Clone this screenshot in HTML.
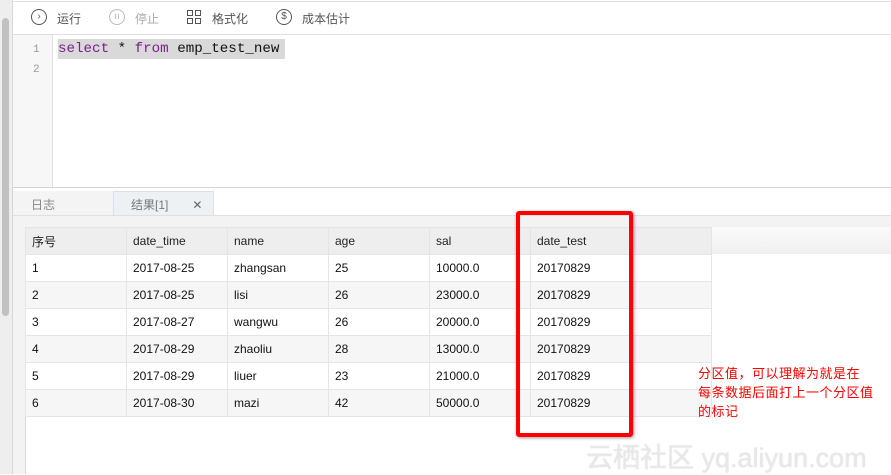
<!DOCTYPE html><html><head><meta charset="utf-8"><style>
*{margin:0;padding:0;box-sizing:border-box}
body{width:891px;height:474px;overflow:hidden;background:#fff;position:relative;font-family:"Liberation Sans","Noto Sans CJK SC",sans-serif;font-size:12px;color:#222}
.a{position:absolute}
.tb span{position:absolute;top:10px;font-size:12px;color:#555}
.ic{position:absolute;top:9px;width:16px;height:16px;border:1.3px solid #555;border-radius:50%;font-size:10px;line-height:14px;text-align:center;color:#555}
table{border-collapse:collapse;position:absolute;left:25px;top:227px}
td{width:101px;height:27px;padding-left:6px;border:1px solid #e2e6ea;font-size:12px;color:#111;vertical-align:middle}
tr.h td{background:#eeeeee;color:#222}
tr:nth-child(odd):not(.h) td{background:#f6f6f6}
</style></head><body>
<div class="a" style="left:0;top:0;width:13px;height:474px;background:#eeeeee;border-right:1px solid #d8d8d8"></div>
<div class="a" style="left:2px;top:18px;width:7px;height:298px;background:#c1c1c1;border-radius:4px"></div>
<div class="a" style="left:13px;top:1px;width:878px;height:1px;background:#e2e2e2"></div>
<div class="a" style="left:13px;top:34px;width:878px;height:1px;background:#e0e0e0"></div>
<div class="tb">
<div class="ic" style="left:31px">›</div><span style="left:57px">运行</span>
<div class="ic" style="left:109px;border-color:#bbb;color:#bbb">ıı</div><span style="left:135px;color:#aaa">停止</span>
<div class="a" style="left:187px;top:10px;width:6px;height:6px;border:1.3px solid #555"></div>
<div class="a" style="left:195px;top:10px;width:6px;height:6px;border:1.3px solid #555"></div>
<div class="a" style="left:187px;top:18px;width:6px;height:6px;border:1.3px solid #555"></div>
<div class="a" style="left:195px;top:18px;width:6px;height:6px;border:1.3px solid #555"></div>
<span style="left:212px">格式化</span>
<div class="ic" style="left:276px">$</div><span style="left:302px">成本估计</span>
</div>
<div class="a" style="left:13px;top:35px;width:40px;height:152px;background:#f7f7f7;border-right:1px solid #e0e0e0"></div>
<div class="a" style="left:33px;top:40px;font-family:'Liberation Mono',monospace;font-size:11px;color:#999;line-height:20px">1<br>2</div>
<div class="a" style="left:58px;top:39px;width:227px;height:20px;background:#d9d9d9"></div>
<div class="a" style="left:58px;top:40px;font-family:'Liberation Mono',monospace;font-size:14.2px;line-height:18px;color:#111;white-space:pre"><span style="color:#7a1e8a">select</span> * <span style="color:#7a1e8a">from</span> emp_test_new</div>
<div class="a" style="left:13px;top:187px;width:878px;height:1px;background:#d4d4d4"></div>
<div class="a" style="left:13px;top:191px;width:100px;height:24px;background:#f4f4f4;color:#888;padding:5px 0 0 18px">日志</div>
<div class="a" style="left:113px;top:191px;width:101px;height:25px;background:#eef1f4;border:1px solid #dde;border-bottom:none;color:#777;padding:4px 0 0 17px">结果[1]<span style="margin-left:24px;color:#666">✕</span></div>
<div class="a" style="left:13px;top:215px;width:878px;height:259px;background:#f3f3f3;border-top:1px solid #e0e0e0"></div>
<div class="a" style="left:25px;top:227px;width:866px;height:247px;background:#fff;border-left:1px solid #d8d8d8;border-top:1px solid #ddd"></div>
<div class="a" style="left:711px;top:227px;width:180px;height:27px;background:linear-gradient(#fbfbfb,#f0f0f0)"></div>
<table>
<tr class="h"><td>序号</td><td>date_time</td><td>name</td><td>age</td><td>sal</td><td style="width:181px">date_test</td></tr>
<tr><td>1</td><td>2017-08-25</td><td>zhangsan</td><td>25</td><td>10000.0</td><td style="width:181px">20170829</td></tr>
<tr><td>2</td><td>2017-08-25</td><td>lisi</td><td>26</td><td>23000.0</td><td style="width:181px">20170829</td></tr>
<tr><td>3</td><td>2017-08-27</td><td>wangwu</td><td>26</td><td>20000.0</td><td style="width:181px">20170829</td></tr>
<tr><td>4</td><td>2017-08-29</td><td>zhaoliu</td><td>28</td><td>13000.0</td><td style="width:181px">20170829</td></tr>
<tr><td>5</td><td>2017-08-29</td><td>liuer</td><td>23</td><td>21000.0</td><td style="width:181px">20170829</td></tr>
<tr><td>6</td><td>2017-08-30</td><td>mazi</td><td>42</td><td>50000.0</td><td style="width:181px">20170829</td></tr>
</table>
<div class="a" style="left:516px;top:211px;width:117px;height:226px;border:4px solid #f00;border-radius:3px;box-shadow:1px 1px 3px rgba(0,0,0,.4)"></div>
<div class="a" style="left:698px;top:364px;color:#f00;font-size:13px;line-height:19px;letter-spacing:0.5px">分区值，可以理解为就是在<br>每条数据后面打上一个分区值<br>的标记</div>
<div class="a" style="left:586px;top:436px;color:rgba(235,235,235,.9);font-size:27px;text-shadow:0 0 1px #ccc;white-space:nowrap">云栖社区 yq.aliyun.com</div>
</body></html>
